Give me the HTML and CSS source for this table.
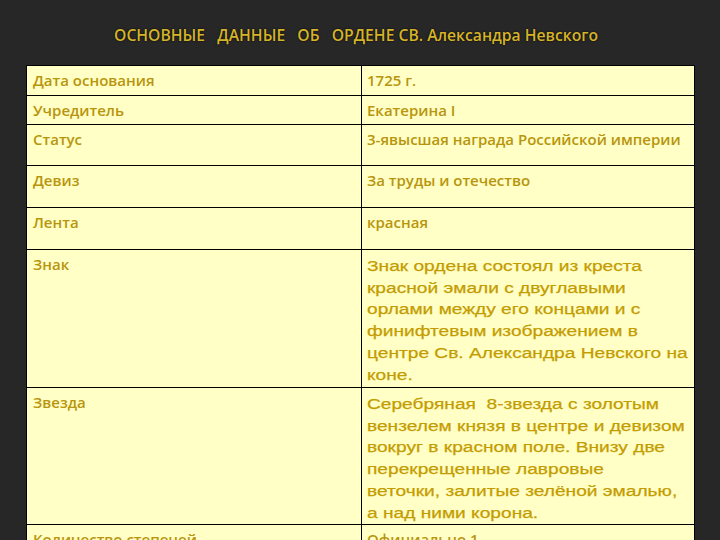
FILE: index.html
```html
<!DOCTYPE html>
<html lang="ru">
<head>
<meta charset="utf-8">
<title>Орден Св. Александра Невского</title>
<link rel="stylesheet" href="styles.css">
</head>
<body>
<div class="page">
  <h1 class="title">ОСНОВНЫЕ&nbsp;&nbsp; ДАННЫЕ&nbsp;&nbsp; ОБ&nbsp;&nbsp; ОРДЕНЕ СВ. Александра Невского</h1>
  <table class="info">
    <tr class="r1"><td class="k">Дата основания</td><td class="v">1725 г.</td></tr>
    <tr class="r2"><td class="k">Учредитель</td><td class="v">Екатерина I</td></tr>
    <tr class="r3"><td class="k">Статус</td><td class="v">3-явысшая награда Российской империи</td></tr>
    <tr class="r4"><td class="k">Девиз</td><td class="v">За труды и отечество</td></tr>
    <tr class="r5"><td class="k">Лента</td><td class="v">красная</td></tr>
    <tr class="r6"><td class="k">Знак</td><td class="v big"><span class="wide">Знак ордена состоял из креста<br>красной эмали с двуглавыми<br>орлами между его концами и с<br>финифтевым изображением в<br>центре Св. Александра Невского на<br>коне.</span></td></tr>
    <tr class="r7"><td class="k">Звезда</td><td class="v big"><span class="wide">Серебряная&nbsp; 8-звезда с золотым<br>вензелем князя в центре и девизом<br>вокруг в красном поле. Внизу две<br>перекрещенные лавровые<br>веточки, залитые зелёной эмалью,<br>а над ними корона.</span></td></tr>
    <tr class="r8"><td class="k">Количество степеней</td><td class="v">Официально 1</td></tr>
  </table>
</div>
</body>
</html>
```
FILE: styles.css
```css
html, body {
  margin: 0;
  padding: 0;
  background: #272727;
}
.page {
  width: 720px;
  height: 540px;
  overflow: hidden;
  padding-top: 26px;
  box-sizing: border-box;
}
.title {
  margin: 0;
  height: 39px;
  padding-right: 8px;
  text-align: center;
  font-family: "Open Sans", sans-serif;
  font-weight: 600;
  font-size: 15.7px;
  line-height: 19px;
  color: #d6b42a;
  text-shadow: 0 0 2px #000;
}
.info {
  margin-left: 26px;
  width: 669px;
  border-collapse: collapse;
  table-layout: fixed;
  background: #ffffc6;
}
.info td {
  border: 1px solid #000;
  vertical-align: top;
  padding: 0;
  white-space: nowrap;
  overflow: hidden;
  color: #b8950c;
}
.info td.k {
  width: 328px;
  padding-left: 6px;
}
.info td.v {
  padding-left: 5px;
}
.info td.k, .info td.v {
  font-family: "Open Sans", sans-serif;
  font-weight: 600;
  font-size: 15px;
  line-height: 18px;
  padding-top: 5px;
}
.info td.v.big {
  font-family: "Liberation Sans", Arial, sans-serif;
  font-weight: 400;
  font-size: 15.5px;
  line-height: 21.7px;
  padding-top: 5px;
  color: #c49c00;
}
.wide {
  display: inline-block;
  transform: scaleX(1.235);
  transform-origin: 0 0;
  -webkit-text-stroke: 0.25px #c49c00;
}
.r1 { height: 30px; }
.r2 { height: 29px; }
.r3 { height: 41px; }
.r4 { height: 42px; }
.r5 { height: 42px; }
.r6 { height: 138px; }
.r7 { height: 137px; }
.r8 { height: 30px; }
```
